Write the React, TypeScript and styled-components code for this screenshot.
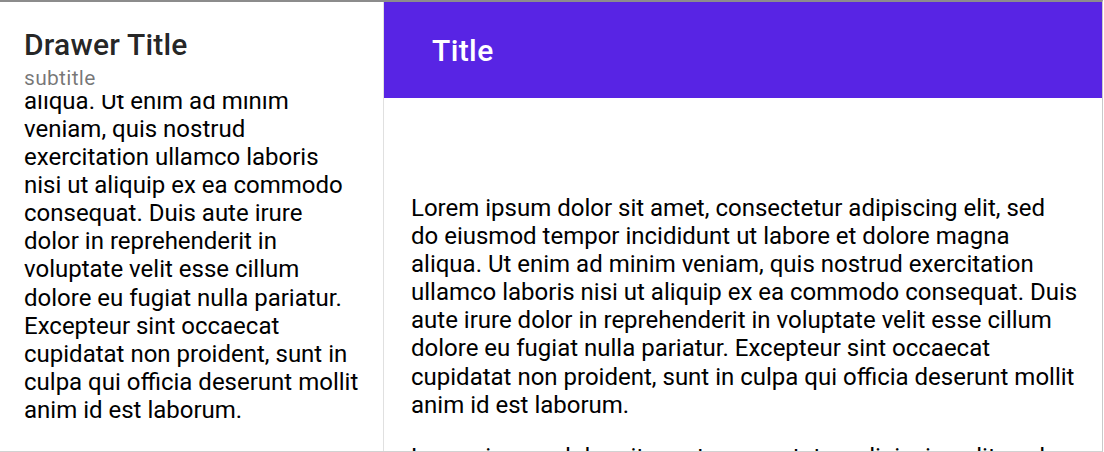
import React, { useLayoutEffect, useRef } from 'react';
import styled, { createGlobalStyle } from 'styled-components';

const lorem =
  'Lorem ipsum dolor sit amet, consectetur adipiscing elit, sed do eiusmod tempor incididunt ut labore et dolore magna aliqua. Ut enim ad minim veniam, quis nostrud exercitation ullamco laboris nisi ut aliquip ex ea commodo consequat. Duis aute irure dolor in reprehenderit in voluptate velit esse cillum dolore eu fugiat nulla pariatur. Excepteur sint occaecat cupidatat non proident, sunt in culpa qui officia deserunt mollit anim id est laborum.';

function App() {
  const drawerContent = useRef<HTMLDivElement>(null);

  // drawer list is shown scrolled all the way down
  useLayoutEffect(() => {
    const el = drawerContent.current;
    if (el) el.scrollTop = el.scrollHeight;
  }, []);

  return (
    <>
      <GlobalStyle />
      <Frame>
        <Drawer>
          <DrawerHeader>
            <DrawerTitle>Drawer Title</DrawerTitle>
            <DrawerSubtitle>subtitle</DrawerSubtitle>
          </DrawerHeader>
          <DrawerContent ref={drawerContent}>
            <Paragraph>{lorem}</Paragraph>
            <Paragraph>{lorem}</Paragraph>
          </DrawerContent>
        </Drawer>
        <Main>
          <TopAppBar>
            <AppBarTitle>Title</AppBarTitle>
          </TopAppBar>
          <MainContent>
            <Paragraph>{lorem}</Paragraph>
            <Paragraph>{lorem}</Paragraph>
          </MainContent>
        </Main>
      </Frame>
    </>
  );
}

export default App;

const GlobalStyle = createGlobalStyle`
  html, body {
    margin: 0;
    padding: 0;
    background: #ffffff;
  }
  body {
    font-family: Roboto, "Liberation Sans", sans-serif;
    -webkit-font-smoothing: antialiased;
  }
`;

const Frame = styled.div`
  box-sizing: border-box;
  width: 1103px;
  height: 452px;
  border-top: 2px solid #8c8c8c;
  border-right: 1px solid #c9c9c9;
  border-bottom: 1px solid #d2d2d2;
  display: flex;
  overflow: hidden;
  background: #ffffff;
`;

const Drawer = styled.aside`
  box-sizing: border-box;
  width: 384px;
  flex-shrink: 0;
  border-right: 1px solid #e0e0e0;
  display: flex;
  flex-direction: column;
  min-height: 0;
`;

const DrawerHeader = styled.header`
  flex-shrink: 0;
  padding: 25px 24px 4px;
`;

const DrawerTitle = styled.h3`
  margin: 0;
  font-size: 30px;
  line-height: 36px;
  font-weight: 500;
  letter-spacing: 0.2px;
  color: rgba(0, 0, 0, 0.87);
`;

const DrawerSubtitle = styled.h6`
  margin: 3px 0 0;
  font-size: 21px;
  line-height: 25px;
  font-weight: 400;
  letter-spacing: 0.3px;
  color: rgba(0, 0, 0, 0.54);
`;

const DrawerContent = styled.div`
  flex: 1;
  min-height: 0;
  overflow: hidden;
  padding: 0 23px 3px 24px;
`;

const Paragraph = styled.p`
  margin: 0 0 24px;
  font-size: 24px;
  line-height: 28.1px;
  color: #000000;
`;

const Main = styled.main`
  flex: 1;
  min-width: 0;
  display: flex;
  flex-direction: column;
`;

const TopAppBar = styled.header`
  flex-shrink: 0;
  height: 96px;
  background: #5824e4;
  display: flex;
  align-items: center;
  padding-left: 48px;
`;

const AppBarTitle = styled.span`
  font-size: 30px;
  font-weight: 500;
  letter-spacing: 0.4px;
  color: #ffffff;
`;

const MainContent = styled.div`
  flex: 1;
  min-height: 0;
  overflow: hidden;
  padding: 96px 24.4px 0 27px;
`;
